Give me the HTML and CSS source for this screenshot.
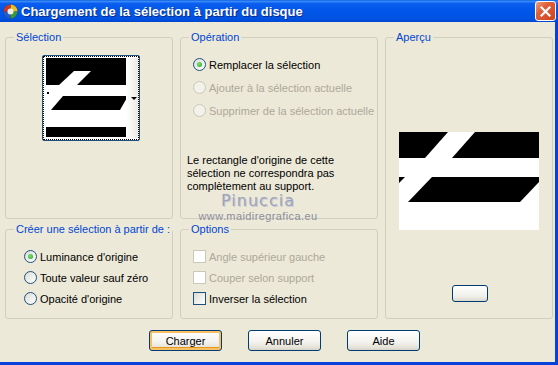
FILE: index.html
```html
<!DOCTYPE html>
<html lang="fr">
<head>
<meta charset="UTF-8">
<title>Chargement de la sélection à partir du disque</title>
<link rel="stylesheet" href="styles.css">
</head>
<body>
<div class="window">
  <div class="titlebar">
    <svg class="app-icon" width="15" height="15" viewBox="0 0 15 15">
      <circle cx="7.5" cy="7.5" r="7" fill="#2b2b2b"/>
      <path d="M7.5 0.5 A7 7 0 0 1 14.5 7.5 L7.5 7.5 Z" fill="#e8c020"/>
      <path d="M14.5 7.5 A7 7 0 0 1 7.5 14.5 L7.5 7.5 Z" fill="#3a9a3a"/>
      <path d="M7.5 14.5 A7 7 0 0 1 0.5 7.5 L7.5 7.5 Z" fill="#2a5cc8"/>
      <path d="M0.5 7.5 A7 7 0 0 1 7.5 0.5 L7.5 7.5 Z" fill="#c83a2a"/>
      <circle cx="7.5" cy="7.5" r="3" fill="#eee"/>
    </svg>
    <span class="title">Chargement de la sélection à partir du disque</span>
    <div class="close-btn">
      <svg width="11" height="11" viewBox="0 0 11 11"><path d="M1.5 1.5 L9.5 9.5 M9.5 1.5 L1.5 9.5" stroke="#fff" stroke-width="2.2" stroke-linecap="square"/></svg>
    </div>
  </div>

  <div class="client">
    <div class="groups">
      <!-- Sélection -->
      <fieldset class="group g-selection">
        <legend>Sélection</legend>
        <div class="swatch">
          <svg class="swatch-img" width="80" height="79" viewBox="0 0 80 79">
            <rect width="80" height="79" fill="#fff"/>
            <rect width="80" height="27" fill="#000"/>
            <polygon points="28,13 45,13 30,28 12,28" fill="#fff"/>
            <polygon points="17,38 80,38 80,41.5 74,52 5,52" fill="#000"/>
            <rect x="1" y="34" width="2" height="2" fill="#000"/>
            <rect y="69" width="80" height="10" fill="#000"/>
          </svg>
          <div class="swatch-drop"><span class="arrow"></span></div>
        </div>
      </fieldset>

      <!-- Opération -->
      <fieldset class="group g-operation">
        <legend>Opération</legend>
        <div class="rows rows-op">
          <div class="opt"><span class="radio on"></span>Remplacer la sélection</div>
          <div class="opt disabled"><span class="radio"></span>Ajouter à la sélection actuelle</div>
          <div class="opt disabled"><span class="radio"></span>Supprimer de la sélection actuelle</div>
        </div>
        <p class="note">Le rectangle d'origine de cette<br>sélection ne correspondra pas<br>complètement au support.</p>
      </fieldset>

      <!-- Aperçu -->
      <fieldset class="group g-preview">
        <legend>Aperçu</legend>
        <svg class="preview-img" width="140" height="98" viewBox="0 0 140 98">
          <rect width="140" height="98" fill="#fff"/>
          <rect width="140" height="26" fill="#000"/>
          <polygon points="49,0 76,0 53,26 26,26" fill="#fff"/>
          <polygon points="33,45 140,45 140,50 121,70 9,70" fill="#000"/>
          <polygon points="0,45 6,45 0,51" fill="#000"/>
        </svg>
        <div class="mini-btn"></div>
      </fieldset>

      <!-- Créer une sélection -->
      <fieldset class="group g-source">
        <legend>Créer une sélection à partir de :</legend>
        <div class="rows">
          <div class="opt"><span class="radio on"></span>Luminance d'origine</div>
          <div class="opt"><span class="radio"></span>Toute valeur sauf zéro</div>
          <div class="opt"><span class="radio"></span>Opacité d'origine</div>
        </div>
      </fieldset>

      <!-- Options -->
      <fieldset class="group g-options">
        <legend>Options</legend>
        <div class="rows">
          <div class="opt disabled"><span class="check"></span>Angle supérieur gauche</div>
          <div class="opt disabled"><span class="check"></span>Couper selon support</div>
          <div class="opt"><span class="check"></span>Inverser la sélection</div>
        </div>
      </fieldset>
    </div>

    <div class="buttons">
      <button class="btn default">Charger</button>
      <button class="btn">Annuler</button>
      <button class="btn">Aide</button>
    </div>
  </div>

  <div class="watermark">
    <div class="wm-name">Pinuccia</div>
    <div class="wm-url">www.maidiregrafica.eu</div>
  </div>
</div>
</body>
</html>
```

FILE: styles.css
```css
* {
    box-sizing: border-box;
}

body {
    margin: 0;
    background: #ece9d8;
    font-family: "Liberation Sans", Arial, sans-serif;
    font-size: 11px;
    color: #000;
}

.window {
    position: relative;
    width: 558px;
    height: 365px;
    overflow: hidden;
}

/* barre de titre */
.titlebar {
    height: 22px;
    display: flex;
    align-items: center;
    padding-left: 3px;
    background: linear-gradient(to bottom, #0b5fe0 0%, #3a8cf8 6%, #0a5ef0 16%, #0056e8 50%, #0052e2 85%, #0047d0 100%);
}

.app-icon {
    flex: none;
}

.title {
    margin-left: 3px;
    color: #fff;
    font-weight: bold;
    font-size: 13px;
    text-shadow: 1px 1px 0 #0a2a8a;
    flex: 1;
}

.close-btn {
    width: 21px;
    height: 20px;
    margin-right: 2px;
    border: 1px solid #fff;
    border-radius: 3px;
    background: linear-gradient(135deg, #f0a080 0%, #e0603a 35%, #cf4220 100%);
    display: flex;
    align-items: center;
    justify-content: center;
}

/* zone client */
.client {
    height: 343px;
    padding: 9px 0 0 5px;
    border-right: 3px solid #0841d9;
    border-bottom: 3px solid #0841d9;
}

.groups {
    display: grid;
    grid-template-columns: 168px 198px 168px;
    grid-template-rows: 188px 96px;
    column-gap: 7px;
    row-gap: 4px;
}

.group {
    margin: 0;
    padding: 0;
    border: 1px solid #d0d0bf;
    border-radius: 3px;
    min-width: 0;
}

.group legend {
    margin-left: 8px;
    padding: 0 2px;
    color: #0046d5;
    line-height: 13px;
    white-space: nowrap;
}

.g-preview {
    grid-column: 3;
    grid-row: 1 / span 2;
}

.g-source {
    grid-column: 1;
    grid-row: 2;
}

.g-options {
    grid-column: 2;
    grid-row: 2;
}

/* vignette de sélection */
.swatch {
    margin: 11px 0 0 36px;
    width: 98px;
    height: 86px;
    border: 1px solid #1c5180;
    border-radius: 2px;
    background: #fff;
    display: flex;
    padding: 2px 1px 2px 3px;
    outline: 1px dotted #000;
    outline-offset: -2px;
}

.swatch-img {
    flex: none;
}

.swatch-drop {
    flex: 1;
    background: linear-gradient(to right, #fff, #ecebe4);
    display: flex;
    align-items: center;
    justify-content: flex-end;
    padding-right: 1px;
}

.arrow {
    width: 0;
    height: 0;
    border-left: 3px solid transparent;
    border-right: 3px solid transparent;
    border-top: 3px solid #000;
}

/* options */
.rows {
    padding: 10px 0 0 18px;
}

.rows-op {
    padding: 9px 0 0 12px;
}

.g-options .rows {
    padding-left: 12px;
}

.opt {
    display: flex;
    align-items: center;
    height: 21px;
}

.rows-op .opt {
    height: 23px;
}

.opt.disabled {
    color: #aca899;
}

.radio {
    position: relative;
    width: 13px;
    height: 13px;
    margin-right: 3px;
    border: 1px solid #1c5180;
    border-radius: 50%;
    background: linear-gradient(135deg, #dcdcd4, #fff);
    flex: none;
}

.radio.on::after {
    content: "";
    position: absolute;
    left: 3px;
    top: 3px;
    width: 5px;
    height: 5px;
    border-radius: 50%;
    background: radial-gradient(circle at 40% 40%, #7ee07a, #21a121);
}

.disabled .radio {
    border-color: #cac8bb;
    background: #f2f1ea;
}

.check {
    width: 13px;
    height: 13px;
    margin-right: 3px;
    border: 1px solid #1c5180;
    background: linear-gradient(135deg, #dcdcd4, #fff);
    flex: none;
}

.disabled .check {
    border-color: #cac8bb;
    background: #fff;
}

.note {
    margin: 32px 0 0 6px;
    line-height: 13px;
}

/* aperçu */
.preview-img {
    display: block;
    margin: 88px 0 0 13px;
}

.mini-btn {
    width: 36px;
    height: 17px;
    margin: 55px 0 0 66px;
    border: 1px solid #003c74;
    border-radius: 3px;
    background: linear-gradient(#fff, #f0efea 70%, #dcd8cc);
}

/* boutons */
.buttons {
    display: flex;
    gap: 26px;
    margin: 11px 0 0 144px;
}

.btn {
    width: 73px;
    height: 21px;
    padding: 0;
    border: 1px solid #003c74;
    border-radius: 3px;
    background: linear-gradient(#fff, #f3f2ee 60%, #e3e0d5 90%, #d6d0c5);
    font-family: "Liberation Sans", Arial, sans-serif;
    font-size: 11px;
    color: #000;
}

.btn.default {
    box-shadow: inset 0 0 0 2px #f8c065, inset 0 -1px 0 2px #e5971f;
}

/* filigrane */
.watermark {
    position: absolute;
    left: 196px;
    top: 191px;
    text-align: center;
    width: 124px;
    pointer-events: none;
}

.wm-name {
    font-family: "DejaVu Sans", sans-serif;
    font-size: 16px;
    letter-spacing: 1px;
    color: #9ea3b9;
    text-shadow: 1px 1px 0 #c9cad2;
    line-height: 19px;
}

.wm-url {
    font-family: "Liberation Sans", sans-serif;
    font-size: 11px;
    letter-spacing: 0.4px;
    color: #8c8e9e;
    line-height: 13px;
}
```
